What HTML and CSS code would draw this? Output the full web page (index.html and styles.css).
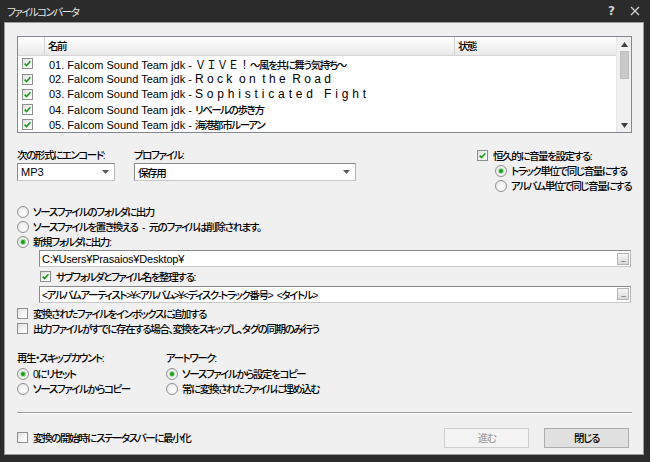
FILE: index.html
```html
<!DOCTYPE html>
<html lang="ja">
<head>
<meta charset="utf-8">
<title>ファイルコンバータ</title>
<link rel="stylesheet" href="styles.css">
</head>
<body>
<div class="window">
  <div class="titlebar">
    <span class="title">ファイルコンバータ</span>
    <span class="tb-help">?</span>
    <span class="tb-close"><svg width="10" height="10" viewBox="0 0 10 10"><path d="M1 1L9 9M9 1L1 9" stroke="#cfcfcf" stroke-width="1.4" fill="none"/></svg></span>
  </div>
  <div class="client">
    <div class="list">
      <div class="list-body">
        <div class="list-head">
          <div class="col-check"></div>
          <div class="col-name">名前</div>
          <div class="col-status">状態</div>
        </div>
        <div class="list-row"><span class="cb on"><svg viewBox="0 0 9 9"><path d="M1.6 4.6L3.6 6.6L7.4 2.2"/></svg></span><span class="track"><span class="lat">01. Falcom Sound Team jdk - </span><span class="fw">ＶＩＶＥ！</span>～風を共に舞う気持ち～</span></div>
        <div class="list-row"><span class="cb on"><svg viewBox="0 0 9 9"><path d="M1.6 4.6L3.6 6.6L7.4 2.2"/></svg></span><span class="track"><span class="lat">02. Falcom Sound Team jdk - </span><span class="spaced">R o c k  o n  t h e  R o a d</span></span></div>
        <div class="list-row"><span class="cb on"><svg viewBox="0 0 9 9"><path d="M1.6 4.6L3.6 6.6L7.4 2.2"/></svg></span><span class="track"><span class="lat">03. Falcom Sound Team jdk - </span><span class="spaced wide">S o p h i s t i c a t e d   F i g h t</span></span></div>
        <div class="list-row"><span class="cb on"><svg viewBox="0 0 9 9"><path d="M1.6 4.6L3.6 6.6L7.4 2.2"/></svg></span><span class="track"><span class="lat">04. Falcom Sound Team jdk - </span>リベールの歩き方</span></div>
        <div class="list-row"><span class="cb on"><svg viewBox="0 0 9 9"><path d="M1.6 4.6L3.6 6.6L7.4 2.2"/></svg></span><span class="track"><span class="lat">05. Falcom Sound Team jdk - </span>海港都市ルーアン</span></div>
      </div>
      <div class="vscroll">
        <span class="sb-btn"><svg width="7" height="5" viewBox="0 0 7 5"><path d="M3.5 0L7 5H0Z" fill="#404040"/></svg></span>
        <span class="sb-thumb"></span>
        <span class="sb-track"></span>
        <span class="sb-btn"><svg width="7" height="5" viewBox="0 0 7 5"><path d="M0 0H7L3.5 5Z" fill="#404040"/></svg></span>
      </div>
    </div>

    <div class="encode">
      <div class="fmt">
        <div class="label">次の形式にエンコード:</div>
        <div class="combo"><span class="combo-text lat">MP3</span><svg class="combo-arrow" width="7" height="4" viewBox="0 0 7 4"><path d="M0 0H7L3.5 4Z" fill="#5a5a5a"/></svg></div>
      </div>
      <div class="profile">
        <div class="label">プロファイル:</div>
        <div class="combo"><span class="combo-text">保存用</span><svg class="combo-arrow" width="7" height="4" viewBox="0 0 7 4"><path d="M0 0H7L3.5 4Z" fill="#5a5a5a"/></svg></div>
      </div>
      <div class="volume">
        <div class="opt"><span class="cb on"><svg viewBox="0 0 9 9"><path d="M1.6 4.6L3.6 6.6L7.4 2.2"/></svg></span><span>恒久的に音量を設定する:</span></div>
        <div class="opt sub"><span class="rb on"></span><span>トラック単位で同じ音量にする</span></div>
        <div class="opt sub"><span class="rb"></span><span>アルバム単位で同じ音量にする</span></div>
      </div>
    </div>

    <div class="output">
      <div class="opt"><span class="rb"></span><span>ソースファイルのフォルダに出力</span></div>
      <div class="opt"><span class="rb"></span><span>ソースファイルを置き換える - 元のファイルは削除されます。</span></div>
      <div class="opt"><span class="rb on"></span><span>新規フォルダに出力:</span></div>
      <div class="field"><span class="field-text lat path">C:¥Users¥Prasaios¥Desktop¥</span><span class="browse">...</span></div>
      <div class="opt subfolder"><span class="cb on"><svg viewBox="0 0 9 9"><path d="M1.6 4.6L3.6 6.6L7.4 2.2"/></svg></span><span>サブフォルダとファイル名を整理する:</span></div>
      <div class="field"><span class="field-text">&lt;アルバムアーティスト&gt;¥&lt;アルバム&gt;¥&lt;ディスク-トラック番号&gt; &lt;タイトル&gt;</span><span class="browse">...</span></div>
    </div>

    <div class="extras">
      <div class="opt"><span class="cb"></span><span>変換されたファイルをインボックスに追加する</span></div>
      <div class="opt"><span class="cb"></span><span>出力ファイルがすでに存在する場合、変換をスキップし、タグの同期のみ行う</span></div>
    </div>

    <div class="counts">
      <div class="count-col">
        <div class="label">再生・スキップカウント:</div>
        <div class="opt"><span class="rb on"></span><span>0にリセット</span></div>
        <div class="opt"><span class="rb"></span><span>ソースファイルからコピー</span></div>
      </div>
      <div class="count-col">
        <div class="label">アートワーク:</div>
        <div class="opt"><span class="rb on"></span><span>ソースファイルから設定をコピー</span></div>
        <div class="opt"><span class="rb"></span><span>常に変換されたファイルに埋め込む</span></div>
      </div>
    </div>

    <div class="separator"></div>

    <div class="footer">
      <div class="opt"><span class="cb"></span><span>変換の開始時にステータスバーに最小化</span></div>
      <div class="buttons">
        <span class="btn disabled">進む</span>
        <span class="btn">閉じる</span>
      </div>
    </div>
  </div>
</div>
</body>
</html>
```

FILE: styles.css
```css
* { box-sizing: border-box; }
html, body { margin: 0; padding: 0; }
body {
  width: 650px;
  height: 462px;
  overflow: hidden;
  background: #2b2b2b;
  font-family: "Liberation Sans", "Noto Sans CJK JP", sans-serif;
  font-size: 10.5px;
  font-weight: 500;
  letter-spacing: -1.4px;
  word-spacing: 3px;
  color: #000;
  font-feature-settings: "palt" 1;
}
.lat { font-size: 11px; font-weight: 400; letter-spacing: 0; word-spacing: 0; }
.fw {
  font-family: "Noto Sans CJK JP", sans-serif;
  font-size: 11px;
  letter-spacing: 0;
  word-spacing: 0;
  font-weight: 400;
  font-feature-settings: normal;
}
.spaced { font-size: 12px; font-weight: 400; letter-spacing: 0; word-spacing: 0; white-space: pre; }
.spaced.wide { letter-spacing: 0.25px; }
.path { letter-spacing: -0.2px; }

.window {
  width: 650px;
  height: 462px;
  display: flex;
  flex-direction: column;
  background: #2b2b2b;
}
.titlebar {
  height: 22px;
  display: flex;
  align-items: center;
  padding-left: 7px;
  color: #e4e4e4;
}
.title { flex: 1; font-size: 10.5px; font-weight: 400; letter-spacing: -1.5px; }
.tb-help {
  width: 12px;
  color: #cfcfcf;
  font-family: "DejaVu Sans", sans-serif;
  font-size: 12px;
  letter-spacing: 0;
  font-weight: bold;
  margin-right: 10px;
}
.tb-close { width: 10px; height: 10px; margin-right: 10px; display: flex; }

.client {
  flex: 1;
  margin: 0 6px 7px 4px;
  border: 1px solid #9c9c9c;
  background: #f0f0f0;
  padding: 13px 11px 0 12px;
  display: flex;
  flex-direction: column;
}

/* list */
.list {
  height: 97px;
  border: 1px solid #828790;
  background: #fff;
  display: flex;
}
.list-body { flex: 1; display: flex; flex-direction: column; }
.list-head {
  height: 19px;
  display: flex;
  background: linear-gradient(#ffffff, #f4f4f4 50%, #e9e9ea);
  border-bottom: 1px solid #d5d5d5;
  line-height: 18px;
}
.col-check { width: 27px; border-right: 1px solid #d5d5d5; }
.col-name { width: 410px; padding-left: 3px; border-right: 1px solid #d5d5d5; }
.col-status { flex: 1; padding-left: 3px; }
.list-row {
  height: 15.6px;
  display: flex;
  align-items: center;
  padding-left: 4px;
  gap: 16px;
  white-space: pre;
}
.vscroll {
  width: 15px;
  background: #f0f0f0;
  border-left: 1px solid #e8e8e8;
  display: flex;
  flex-direction: column;
  align-items: center;
}
.sb-btn { height: 14px; width: 15px; display: flex; align-items: center; justify-content: center; }
.sb-thumb {
  width: 9px;
  height: 28px;
  background: #c9c9c9;
  border: 1px solid #bdbdbd;
}
.sb-track { flex: 1; }

/* checkbox / radio */
.cb {
  width: 11px;
  height: 11px;
  flex: none;
  border: 1px solid #8e8f8f;
  background: linear-gradient(135deg, #dedede, #f8f8f8 60%, #ffffff);
  display: inline-flex;
}
.cb svg { width: 9px; height: 9px; }
.cb path { fill: none; stroke: #1e9c1e; stroke-width: 1.6; }
.rb {
  width: 12px;
  height: 12px;
  flex: none;
  border: 1px solid #8e8f8f;
  border-radius: 50%;
  background: radial-gradient(circle at 60% 65%, #ffffff, #e4e4e4);
  display: inline-flex;
  align-items: center;
  justify-content: center;
}
.rb.on::after {
  content: "";
  width: 4px;
  height: 4px;
  border-radius: 50%;
  background: #1f9a1f;
  box-shadow: 0 0 0 1px #a6dca6;
}

.label { height: 15px; line-height: 15px; white-space: nowrap; }
.opt {
  height: 15px;
  display: flex;
  align-items: center;
  gap: 4px;
  white-space: nowrap;
}
.opt .cb { margin-right: 1px; }

/* encode row */
.encode { display: flex; margin-top: 15px; }
.fmt { width: 98px; }
.profile { width: 222px; margin-left: 19px; }
.volume { margin-left: auto; width: 155px; }
.volume .sub { padding-left: 18px; }
.combo {
  height: 18px;
  background: #fff;
  border: 1px solid;
  border-color: #8a8a8a #b5b5b5 #c8c8c8 #8a8a8a;
  display: flex;
  align-items: center;
  padding: 0 5px 0 3px;
}
.combo-text { flex: 1; }
.combo-arrow { flex: none; }

/* output */
.output { margin-top: 11px; display: flex; flex-direction: column; }
.field {
  height: 17px;
  margin: 1px 1px 0 22px;
  background: #fff;
  border: 1px solid;
  border-color: #8a8a8a #b5b5b5 #c8c8c8 #8a8a8a;
  display: flex;
  align-items: center;
  padding: 0 1px 0 2px;
}
.field-text { flex: 1; white-space: nowrap; }
.browse {
  width: 12px;
  height: 12px;
  border: 1px solid #b5b5b5;
  background: linear-gradient(#f6f6f6, #d9d9d9);
  font-size: 9px;
  font-weight: 400;
  line-height: 10px;
  color: #555;
  text-align: center;
  letter-spacing: -1px;
  word-spacing: 0;
}
.subfolder { margin: 1.5px 0 1px 23px; }

.extras { margin-top: 3.5px; display: flex; flex-direction: column; }

.counts { margin-top: 15px; display: flex; }
.count-col { width: 149px; }

.separator {
  margin-top: 15.5px;
  height: 2px;
  border-top: 1px solid #a0a0a0;
  border-bottom: 1px solid #ffffff;
}

.footer {
  margin-top: 14px;
  display: flex;
  align-items: center;
  height: 20px;
}
.buttons { margin-left: auto; margin-right: 3px; display: flex; gap: 15px; }
.btn {
  width: 85px;
  height: 20px;
  border: 1px solid #adadad;
  background: #e1e1e1;
  display: flex;
  align-items: center;
  justify-content: center;
}
.btn.disabled {
  border-color: #cfcfcf;
  background: #f4f4f4;
  color: #a3a3a3;
}
```
